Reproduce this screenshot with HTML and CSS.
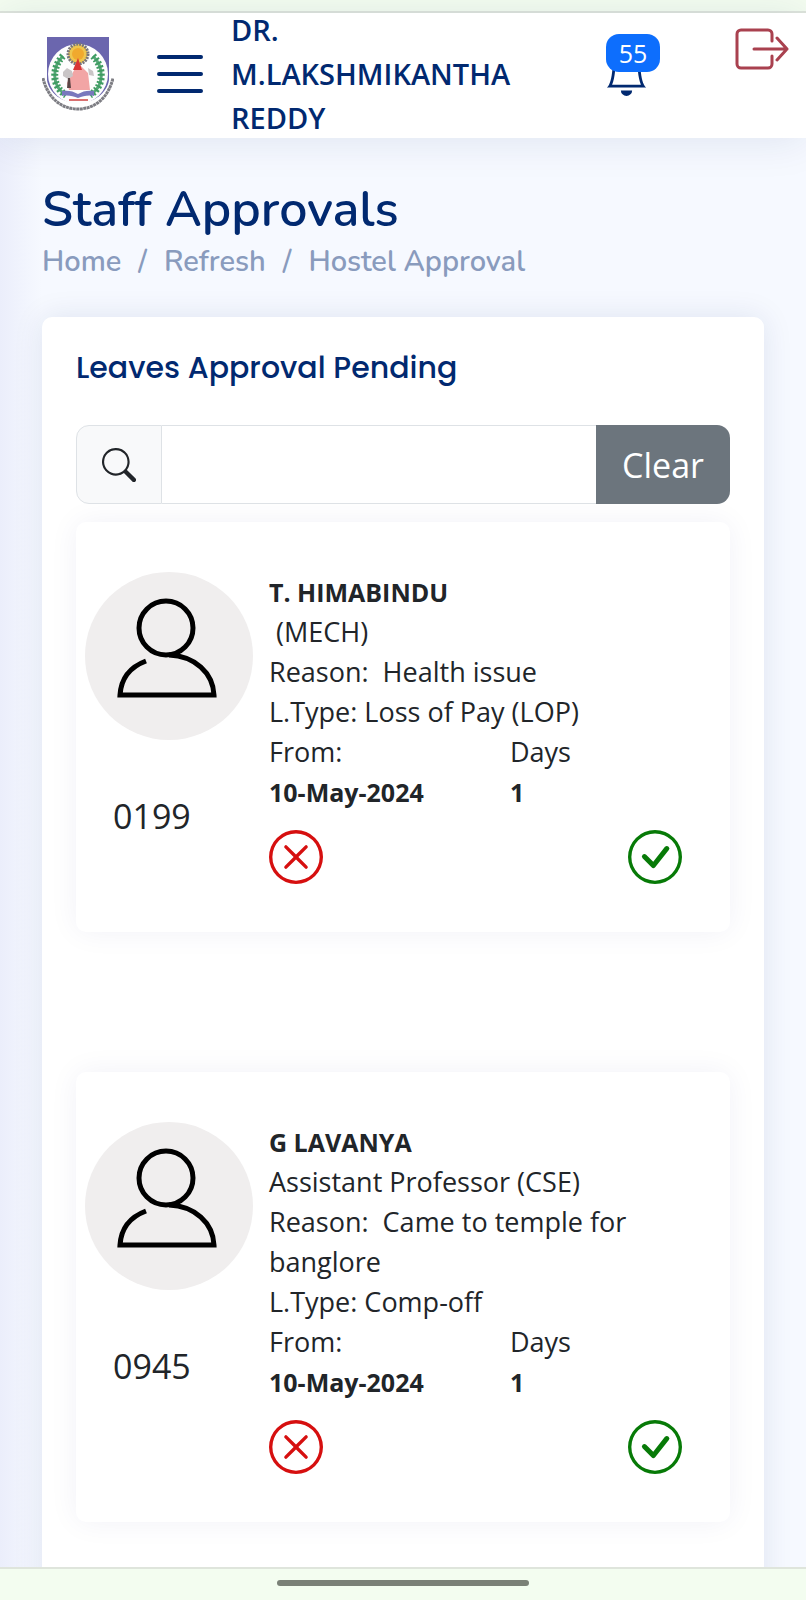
FILE: index.html
```html
<!DOCTYPE html>
<html lang="en">
<head>
	<meta charset="utf-8">
	<meta name="viewport" content="width=device-width, initial-scale=1">
	<title>Staff Approvals</title>
	<link rel="stylesheet" href="styles.css">
</head>
<body>
	<!-- shared icons -->
	<svg class="sprite" aria-hidden="true">
		<symbol id="person" viewBox="0 0 168 168">
			<circle cx="81" cy="56" r="27" />
			<path d="M61 89C45 95 36 107 35 123H129C128 101 110 84 84 83" />
		</symbol>
		<symbol id="reject" viewBox="0 0 16 16">
			<path d="M8 15A7 7 0 1 1 8 1a7 7 0 0 1 0 14zm0 1A8 8 0 1 0 8 0a8 8 0 0 0 0 16z" />
			<path d="M4.646 4.646a.5.5 0 0 1 .708 0L8 7.293l2.646-2.647a.5.5 0 0 1 .708.708L8.707 8l2.647 2.646a.5.5 0 0 1-.708.708L8 8.707l-2.646 2.647a.5.5 0 0 1-.708-.708L7.293 8 4.646 5.354a.5.5 0 0 1 0-.708z" />
		</symbol>
		<symbol id="accept" viewBox="0 0 16 16">
			<path d="M8 15A7 7 0 1 1 8 1a7 7 0 0 1 0 14zm0 1A8 8 0 1 0 8 0a8 8 0 0 0 0 16z" />
			<path d="M10.97 4.97a.235.235 0 0 0-.02.022L7.477 9.417 5.384 7.323a.75.75 0 0 0-1.06 1.06L6.97 11.03a.75.75 0 0 0 1.079-.02l3.992-4.99a.75.75 0 0 0-1.071-1.05z" />
		</symbol>
	</svg>

	<div class="statusbar"></div>

	<header class="header">
		<a href="#" class="logo" aria-label="Home">
			<svg viewBox="0 0 72 76">
				<path d="M5 1H67V44C65 57 52 67 36 67S7 57 5 44z" fill="#6b66ae" />
				<circle cx="36" cy="38" r="30" fill="#fdfdfd" />
				<path d="M1 42C6 63 20 73 36 73S66 63 71 42" fill="none" stroke="#7d7d83" stroke-width="3" stroke-dasharray="3 .5" />
				<path d="M21 20C10 31 9 50 24 59M51 20C62 31 63 50 48 59" fill="none" stroke="#58a878" stroke-width="3" />
				<path d="M21 20C10 31 9 50 24 59M51 20C62 31 63 50 48 59" fill="none" stroke="#3f9c62" stroke-width="7" stroke-dasharray="2 2" />
				<path d="M36 27L46 37 48 54H27L25 47 30 38z" fill="#f2a5a5" />
				<path d="M21 36l4-4 5 3 1 5-5 3-5-3zM46 32l5 3 1 5-5-1z" fill="#c9c5c6" />
				<path d="M26 42h2l1 10h-4z" fill="#5b4545" />
				<circle cx="36" cy="18" r="10" fill="#efc64e" stroke="#77757c" stroke-width="3" stroke-dasharray="2 1" />
				<circle cx="36" cy="18" r="6" fill="#f0a92e" />
				<path d="M36 22l4 12h-9z" fill="#d93636" />
				<path d="M20 55c6-1 11 0 16 3 5-3 10-4 16-3v5c-6-1-11 0-16 2-5-2-10-3-16-2z" fill="#7878bd" />
				<path d="M27 64h19" stroke="#d97070" stroke-width="2" />
			</svg>
		</a>
		<button class="toggle" aria-label="Toggle menu">
			<svg viewBox="0 0 46 38"><path d="M2 2H44M2 19H44M2 36H44" /></svg>
		</button>
		<span class="user">DR. M.LAKSHMIKANTHA REDDY</span>
		<button class="bell" aria-label="Notifications">
			<svg viewBox="0 0 16 16"><path d="M8 16a2 2 0 0 0 2-2H6a2 2 0 0 0 2 2zM8 1.918l-.797.161A4.002 4.002 0 0 0 4 6c0 .628-.134 2.197-.459 3.742-.16.767-.376 1.566-.663 2.258h10.244c-.287-.692-.502-1.49-.663-2.258C12.134 8.197 12 6.628 12 6a4.002 4.002 0 0 0-3.203-3.92L8 1.917zM14.22 12c.223.447.481.801.78 1H1c.299-.199.557-.553.78-1C2.68 10.2 3 6.88 3 6c0-2.42 1.72-4.44 4.005-4.901a1 1 0 1 1 1.99 0A5.002 5.002 0 0 1 13 6c0 .88.32 4.2 1.22 6z" /></svg>
			<span class="badge">55</span>
		</button>
		<a href="#" class="logout" aria-label="Log out">
			<svg viewBox="0 0 54 42"><path d="M37 13V6a4 4 0 0 0-4-4H6a4 4 0 0 0-4 4V36a4 4 0 0 0 4 4H33a4 4 0 0 0 4-4V28M19 21H52M42 10L52 21 42 32" /></svg>
		</a>
	</header>

	<main class="main">
		<h1>Staff Approvals</h1>
		<nav class="breadcrumb">
			<a href="#">Home</a>
			<span>/</span>
			<a href="#">Refresh</a>
			<span>/</span>
			<a href="#">Hostel Approval</a>
		</nav>

		<section class="panel">
			<h2>Leaves Approval Pending</h2>
			<div class="search">
				<label for="search" aria-label="Search">
					<svg viewBox="0 0 16 16"><path d="M11.742 10.344a6.5 6.5 0 1 0-1.397 1.398h-.001c.03.04.062.078.098.115l3.85 3.85a1 1 0 0 0 1.415-1.414l-3.85-3.85a1.007 1.007 0 0 0-.115-.1zM12 6.5a5.5 5.5 0 1 1-11 0 5.5 5.5 0 0 1 11 0z" /></svg>
				</label>
				<input type="text" id="search">
				<button>Clear</button>
			</div>

			<article class="leave">
				<div class="staff">
					<svg class="avatar"><use href="#person" /></svg>
					<p>0199</p>
				</div>
				<div class="details">
					<p><b>T. HIMABINDU</b></p>
					<p>&nbsp;(MECH)</p>
					<p>Reason:&nbsp; Health issue</p>
					<p>L.Type: Loss of Pay (LOP)</p>
					<div class="dates">
						<p>From:<br><b>10-May-2024</b></p>
						<p>Days<br><b>1</b></p>
					</div>
					<div class="actions">
						<button class="reject" aria-label="Reject"><svg><use href="#reject" /></svg></button>
						<button class="accept" aria-label="Approve"><svg><use href="#accept" /></svg></button>
					</div>
				</div>
			</article>

			<article class="leave">
				<div class="staff">
					<svg class="avatar"><use href="#person" /></svg>
					<p>0945</p>
				</div>
				<div class="details">
					<p><b>G LAVANYA</b></p>
					<p>Assistant Professor (CSE)</p>
					<p>Reason:&nbsp; Came to temple for banglore</p>
					<p>L.Type: Comp-off</p>
					<div class="dates">
						<p>From:<br><b>10-May-2024</b></p>
						<p>Days<br><b>1</b></p>
					</div>
					<div class="actions">
						<button class="reject" aria-label="Reject"><svg><use href="#reject" /></svg></button>
						<button class="accept" aria-label="Approve"><svg><use href="#accept" /></svg></button>
					</div>
				</div>
			</article>
		</section>
	</main>

	<div class="navbar"><span></span></div>
</body>
</html>
```
FILE: styles.css
```css
* {
	margin: 0;
	padding: 0;
	box-sizing: border-box;
}
body {
	display: flex;
	flex-direction: column;
	height: 100vh;
	overflow: hidden;
	font-family: "Open Sans", sans-serif;
	font-size: 27px;
	line-height: 40px;
	color: #212529;
	background: #f6f9ff;
}
a {
	color: inherit;
	text-decoration: none;
}
button {
	font: inherit;
	color: inherit;
	border: none;
	background: none;
}
svg {
	display: block;
}
.sprite {
	position: absolute;
	width: 0;
	height: 0;
}
/* phone bars */
.statusbar {
	flex: none;
	height: 13px;
	background: #f4fdf0;
	border-bottom: 2px solid #dfe5dc;
}
.navbar {
	flex: none;
	display: flex;
	justify-content: center;
	height: 33px;
	padding-top: 11px;
	background: #f3fdf0;
	border-top: 2px solid #dfe5dc;
	z-index: 2;
}
.navbar span {
	width: 252px;
	height: 6px;
	border-radius: 3px;
	background: #7a8177;
}
/* header */
.header {
	flex: none;
	display: flex;
	align-items: center;
	height: 125px;
	padding: 0 17px 4px 42px;
	color: #012970;
	background: #fff;
	box-shadow: 0 2px 40px rgba(1, 41, 112, .1);
	z-index: 1;
}
.logo svg {
	width: 72px;
	height: 76px;
}
.toggle {
	margin: 0 28px 0 43px;
}
.toggle svg {
	width: 46px;
	height: 38px;
	fill: none;
	stroke: currentColor;
	stroke-width: 4;
	stroke-linecap: round;
}
.user {
	width: 290px;
	font-size: 29px;
	font-weight: 600;
	line-height: 44px;
}
.bell {
	position: relative;
	margin-left: auto;
	margin-right: 86px;
}
.bell svg {
	width: 45px;
	height: 45px;
	fill: currentColor;
}
.badge {
	position: absolute;
	top: -17px;
	left: 2px;
	width: 54px;
	height: 38px;
	border-radius: 13px;
	font-size: 25px;
	line-height: 38px;
	color: #fff;
	background: #0d6efd;
}
.logout {
	align-self: flex-start;
	margin-top: 15px;
}
.logout svg {
	width: 54px;
	height: 42px;
	fill: none;
	stroke: #a9414f;
	stroke-width: 3;
	stroke-linecap: round;
	stroke-linejoin: round;
}
/* content */
.main {
	flex: 1;
	min-height: 0;
	padding: 40px 42px 0;
	overflow: hidden;
	background: linear-gradient(to right, #ebeefb, rgba(246, 249, 255, 0) 42px);
}
h1 {
	font-family: Nunito, Lato, sans-serif;
	font-size: 50px;
	font-weight: 600;
	line-height: 64px;
	color: #012970;
}
.breadcrumb {
	display: flex;
	gap: 17px;
	margin-bottom: 35px;
	font-family: Nunito, Lato, sans-serif;
	font-size: 29px;
	font-weight: 600;
	color: #899bbd;
}
.panel {
	min-height: 100%;
	padding: 30px 34px;
	border-radius: 10px;
	background: #fff;
	box-shadow: 0 0 30px rgba(1, 41, 112, .1);
}
h2 {
	margin-bottom: 36px;
	font-family: Poppins, Inter, sans-serif;
	font-size: 30px;
	font-weight: 500;
	line-height: 42px;
	color: #012970;
}
.search {
	display: flex;
	height: 79px;
	margin-bottom: 18px;
}
.search label {
	display: flex;
	align-items: center;
	justify-content: center;
	width: 86px;
	border: 1px solid #dee2e6;
	border-radius: 13px 0 0 13px;
	background: #f8f9fa;
}
.search label svg {
	width: 34px;
	height: 34px;
	fill: #212529;
}
.search input {
	flex: 1;
	min-width: 0;
	padding: 0 25px;
	border: 1px solid #dee2e6;
	border-width: 1px 0;
	font: inherit;
	outline: none;
}
.search button {
	width: 134px;
	border-radius: 0 13px 13px 0;
	font-size: 34px;
	color: #fff;
	background: #6c757d;
}
/* leave request */
.leave {
	display: flex;
	margin-bottom: 140px;
	padding: 50px 48px 48px 9px;
	border-radius: 10px;
	background: #fff;
	box-shadow: 0 0 30px rgba(1, 41, 112, .06);
}
.staff {
	flex: none;
	width: 184px;
}
.staff p {
	margin-top: 51px;
	padding-left: 28px;
	font-size: 34px;
	line-height: 50px;
}
.avatar {
	width: 168px;
	height: 168px;
	border-radius: 50%;
	fill: none;
	stroke: #000;
	stroke-width: 5;
	background: #f0eeee;
}
.details {
	flex: 1;
}
.details b {
	font-size: 25px;
}
.dates {
	display: grid;
	grid-template-columns: 7fr 5fr;
}
.actions {
	display: flex;
	justify-content: space-between;
	margin-top: 18px;
}
.actions svg {
	width: 54px;
	height: 54px;
	fill: currentColor;
}
.reject {
	color: #d60f0f;
}
.accept {
	color: #077a07;
}
```
